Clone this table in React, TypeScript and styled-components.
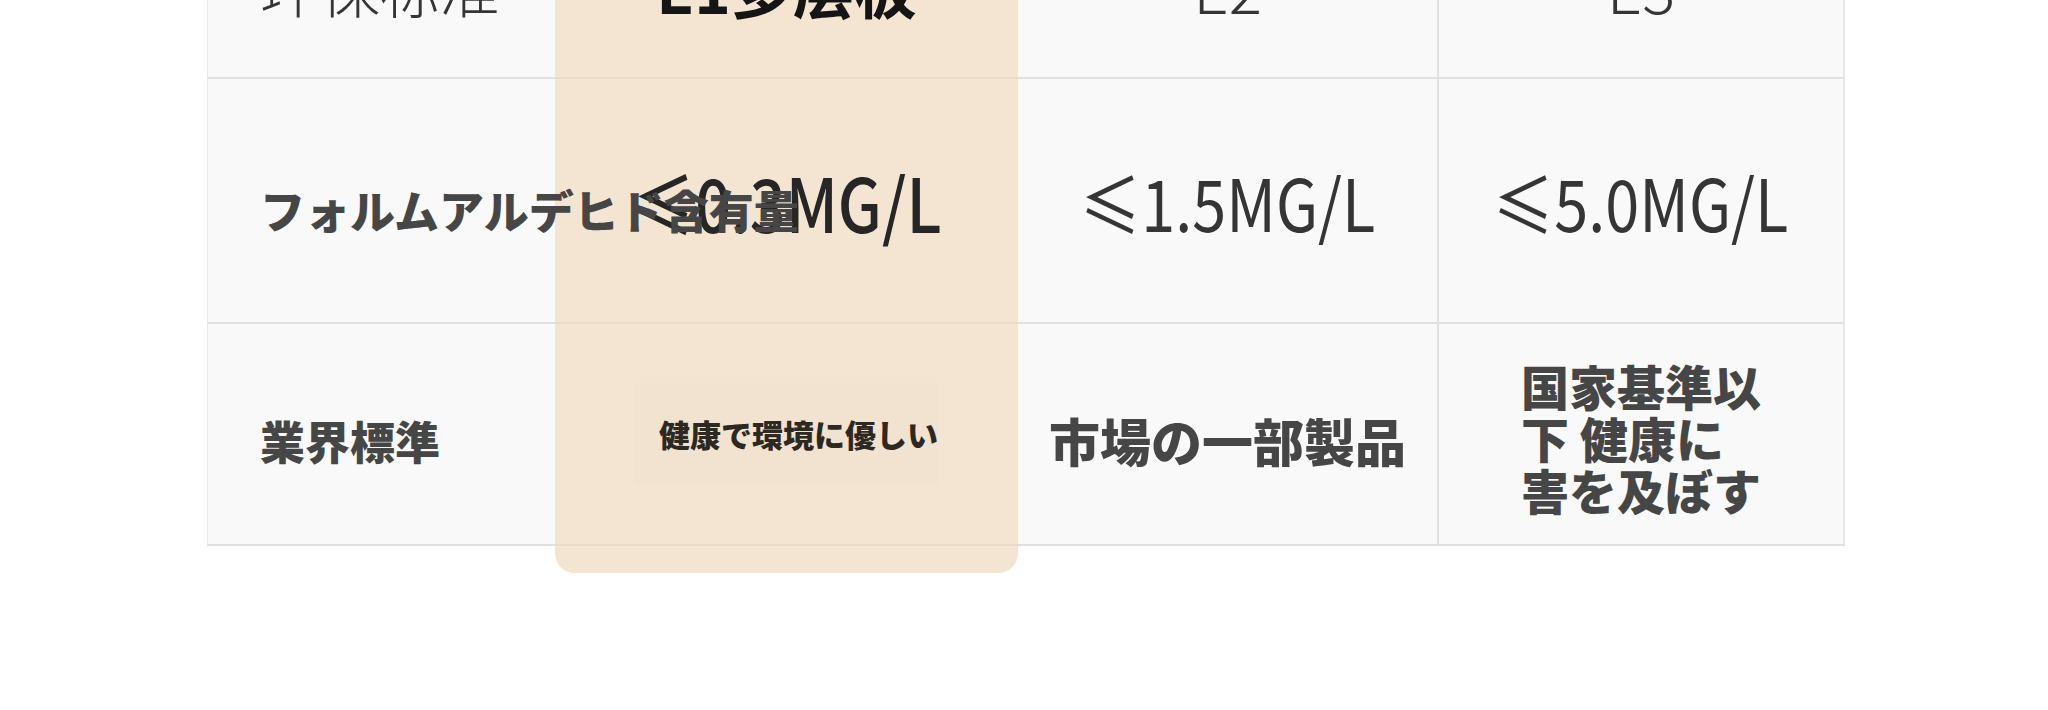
import * as React from 'react'
import styled, { createGlobalStyle } from 'styled-components'

const GlobalStyle = createGlobalStyle`
  html, body {
    margin: 0;
    padding: 0;
    background: #ffffff;
  }
`

type Col = 'label' | 'pick' | 'plain' | 'edge'

const Page = styled.div`
  width: 2048px;
  height: 710px;
  overflow: hidden;
  background: #ffffff;
`

// the page is scrolled: the first row sits mostly above the fold
const Table = styled.div`
  display: grid;
  grid-template-columns: 348px 463px 421px 406px;
  grid-template-rows: 182px 245px 222px 27px;
  width: 1638px;
  margin: -103px 0 0 207px;
`

const Cell = styled.div<{ $col: Col; $shift?: number }>`
  box-sizing: border-box;
  display: flex;
  align-items: center;
  justify-content: ${p => (p.$col === 'label' ? 'flex-start' : 'center')};
  padding: ${p => p.$shift ?? 0}px 0 0 ${p => (p.$col === 'label' ? 52 : 0)}px;
  background: ${p => (p.$col === 'pick' ? '#f3e5d1' : '#f9f9f9')};
  border-bottom: 2px solid ${p => (p.$col === 'pick' ? '#e8dbc7' : '#e1e1e1')};
  border-left: ${p => (p.$col === 'label' ? '1px solid #ebebeb' : 'none')};
  border-right: ${p =>
    p.$col === 'plain' ? '2px solid #e0e0e0' : p.$col === 'edge' ? '2px solid #e7e7e7' : 'none'};
  white-space: nowrap;
  min-width: 0;
  z-index: ${p => (p.$col === 'label' ? 2 : 'auto')};
`

const Tail = styled.div`
  grid-column: 2;
  background: #f3e5d1;
  border-radius: 0 0 20px 20px;
`

const Raw = styled.span<{ $tone?: 'head' | 'value' | 'strong' | 'pick' }>`
  display: inline-block;
  font-family: "Noto Sans CJK SC", "Noto Sans", sans-serif;
  font-size: ${p => (p.$tone === 'pick' ? 74 : p.$tone === 'value' ? 72 : p.$tone === 'head' ? 60 : 62)}px;
  font-weight: ${p => (p.$tone === 'strong' ? 700 : p.$tone === 'pick' ? 500 : p.$tone === 'value' ? 400 : 300)};
  color: ${p => (p.$tone === 'strong' ? '#151515' : p.$tone === 'pick' ? '#262626' : '#353535')};
  line-height: 1;
  transform: ${p => (p.$tone === 'value' || p.$tone === 'pick' ? 'scaleX(0.85)' : 'none')};
`

const Overlay = styled.span<{ $size: number; $ink?: string }>`
  display: inline-block;
  font-family: "Noto Sans CJK JP", "Noto Sans CJK SC", sans-serif;
  font-weight: 900;
  font-size: ${p => p.$size}px;
  line-height: 1.1;
  color: ${p => p.$ink ?? '#464646'};
`

const Stack = styled(Overlay)`
  text-align: left;
  line-height: 52px;
  white-space: normal;
`

const Patch = styled.div`
  padding: 34px 0 34px 24px;
  background: #f1e3cf;
`

export default function App() {
  return (
    <>
      <GlobalStyle />
      <Page>
        <Table>
          <Cell $col="label"><Raw $tone="head">环保标准</Raw></Cell>
          <Cell $col="pick"><Raw $tone="strong">E1多层板</Raw></Cell>
          <Cell $col="plain"><Raw>E2</Raw></Cell>
          <Cell $col="edge"><Raw>E3</Raw></Cell>

          <Cell $col="label" $shift={18}><Overlay $size={45}>フォルムアルデヒド含有量</Overlay></Cell>
          <Cell $col="pick" $shift={0}><Raw $tone="pick">≤0.3MG/L</Raw></Cell>
          <Cell $col="plain" $shift={0}><Raw $tone="value">≤1.5MG/L</Raw></Cell>
          <Cell $col="edge" $shift={0}><Raw $tone="value">≤5.0MG/L</Raw></Cell>

          <Cell $col="label" $shift={14}><Overlay $size={45}>業界標準</Overlay></Cell>
          <Cell $col="pick">
            <Patch><Overlay $size={31} $ink="#2e2823">健康で環境に優しい</Overlay></Patch>
          </Cell>
          <Cell $col="plain" $shift={12}><Overlay $size={51}>市場の一部製品</Overlay></Cell>
          <Cell $col="edge" $shift={6}>
            <Stack $size={48}>国家基準以<br />下 健康に<br />害を及ぼす</Stack>
          </Cell>

          <Tail />
        </Table>
      </Page>
    </>
  )
}
